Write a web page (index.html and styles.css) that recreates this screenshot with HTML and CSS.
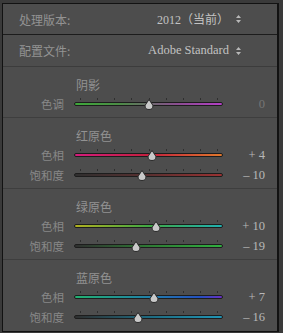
FILE: index.html
```html
<!DOCTYPE html>
<html lang="zh-CN">
<head>
<meta charset="utf-8">
<link rel="stylesheet" href="styles.css">
</head>
<body>
<div class="panel">
  <div class="top-row first">
    <span class="top-label">处理版本:</span>
    <span class="top-value">2012（当前）</span>
    <svg class="updown" width="5" height="8" viewBox="0 0 5 8"><path d="M2.5 0 L5 3 L0 3 Z M0 5 L5 5 L2.5 8 Z" fill="#b8b8b8"/></svg>
  </div>
  <div class="top-row second">
    <span class="top-label">配置文件:</span>
    <span class="top-value latin">Adobe Standard</span>
    <svg class="updown" width="5" height="8" viewBox="0 0 5 8"><path d="M2.5 0 L5 3 L0 3 Z M0 5 L5 5 L2.5 8 Z" fill="#b8b8b8"/></svg>
  </div>

  <div class="section shadows">
    <div class="sec-title">阴影</div>
    <div class="srow">
      <span class="lbl">色调</span>
      <div class="slider">
        <div class="ticks"><i></i><i></i><i></i><i></i><i></i><i></i><i></i><i></i><i></i></div>
        <div class="track tr-shadow"></div>
        <svg class="thumb" style="left:70px" width="10" height="11" viewBox="0 0 10 11"><path d="M5 0.5 L8.8 6.2 Q9.6 10.5 5 10.5 Q0.4 10.5 1.2 6.2 Z" fill="#c9c9c9" stroke="#2a2a2a" stroke-width="1"/></svg>
      </div>
      <span class="val dim">0</span>
    </div>
  </div>

  <div class="section">
    <div class="sec-title">红原色</div>
    <div class="srow">
      <span class="lbl">色相</span>
      <div class="slider">
        <div class="ticks"><i></i><i></i><i></i><i></i><i></i><i></i><i></i><i></i><i></i></div>
        <div class="track tr-red-hue"></div>
        <svg class="thumb" style="left:73px" width="10" height="11" viewBox="0 0 10 11"><path d="M5 0.5 L8.8 6.2 Q9.6 10.5 5 10.5 Q0.4 10.5 1.2 6.2 Z" fill="#c9c9c9" stroke="#2a2a2a" stroke-width="1"/></svg>
      </div>
      <span class="val">+ 4</span>
    </div>
    <div class="srow">
      <span class="lbl">饱和度</span>
      <div class="slider">
        <div class="ticks"><i></i><i></i><i></i><i></i><i></i><i></i><i></i><i></i><i></i></div>
        <div class="track tr-red-sat"></div>
        <svg class="thumb" style="left:63px" width="10" height="11" viewBox="0 0 10 11"><path d="M5 0.5 L8.8 6.2 Q9.6 10.5 5 10.5 Q0.4 10.5 1.2 6.2 Z" fill="#c9c9c9" stroke="#2a2a2a" stroke-width="1"/></svg>
      </div>
      <span class="val">– 10</span>
    </div>
  </div>

  <div class="section">
    <div class="sec-title">绿原色</div>
    <div class="srow">
      <span class="lbl">色相</span>
      <div class="slider">
        <div class="ticks"><i></i><i></i><i></i><i></i><i></i><i></i><i></i><i></i><i></i></div>
        <div class="track tr-green-hue"></div>
        <svg class="thumb" style="left:77px" width="10" height="11" viewBox="0 0 10 11"><path d="M5 0.5 L8.8 6.2 Q9.6 10.5 5 10.5 Q0.4 10.5 1.2 6.2 Z" fill="#c9c9c9" stroke="#2a2a2a" stroke-width="1"/></svg>
      </div>
      <span class="val">+ 10</span>
    </div>
    <div class="srow">
      <span class="lbl">饱和度</span>
      <div class="slider">
        <div class="ticks"><i></i><i></i><i></i><i></i><i></i><i></i><i></i><i></i><i></i></div>
        <div class="track tr-green-sat"></div>
        <svg class="thumb" style="left:56.5px" width="10" height="11" viewBox="0 0 10 11"><path d="M5 0.5 L8.8 6.2 Q9.6 10.5 5 10.5 Q0.4 10.5 1.2 6.2 Z" fill="#c9c9c9" stroke="#2a2a2a" stroke-width="1"/></svg>
      </div>
      <span class="val">– 19</span>
    </div>
  </div>

  <div class="section">
    <div class="sec-title">蓝原色</div>
    <div class="srow">
      <span class="lbl">色相</span>
      <div class="slider">
        <div class="ticks"><i></i><i></i><i></i><i></i><i></i><i></i><i></i><i></i><i></i></div>
        <div class="track tr-blue-hue"></div>
        <svg class="thumb" style="left:75px" width="10" height="11" viewBox="0 0 10 11"><path d="M5 0.5 L8.8 6.2 Q9.6 10.5 5 10.5 Q0.4 10.5 1.2 6.2 Z" fill="#c9c9c9" stroke="#2a2a2a" stroke-width="1"/></svg>
      </div>
      <span class="val">+ 7</span>
    </div>
    <div class="srow">
      <span class="lbl">饱和度</span>
      <div class="slider">
        <div class="ticks"><i></i><i></i><i></i><i></i><i></i><i></i><i></i><i></i><i></i></div>
        <div class="track tr-blue-sat"></div>
        <svg class="thumb" style="left:58.5px" width="10" height="11" viewBox="0 0 10 11"><path d="M5 0.5 L8.8 6.2 Q9.6 10.5 5 10.5 Q0.4 10.5 1.2 6.2 Z" fill="#c9c9c9" stroke="#2a2a2a" stroke-width="1"/></svg>
      </div>
      <span class="val">– 16</span>
    </div>
  </div>
</div>
</body>
</html>
```

FILE: styles.css
```css
html, body {
  margin: 0;
  padding: 0;
}
body {
  width: 283px;
  height: 333px;
  background: #3a3a3a;
  font-family: "Liberation Serif", "Noto Sans CJK SC", serif;
  overflow: hidden;
}
.panel {
  box-sizing: border-box;
  margin: 3px 0 0 2px;
  width: 277px;
  height: 329px;
  border: 1px solid #121212;
  border-right-width: 2px;
  background: #4d4d4d;
  display: flex;
  flex-direction: column;
}
.top-row {
  display: flex;
  align-items: center;
  padding: 0 36px 0 16px;
  font-size: 12.5px;
}
.top-row.first {
  height: 30px;
  border-bottom: 1px solid #1c1c1c;
}
.top-row.second {
  height: 31px;
  border-bottom: 1px solid #3c3c3c;
}
.top-label {
  color: #939393;
  font-family: "Noto Sans CJK SC", sans-serif;
  font-size: 12px;
}
.top-value {
  margin-left: auto;
  color: #c2c2c2;
  font-family: "Liberation Serif", "Noto Sans CJK SC", serif;
  font-size: 12px;
}
.top-value.latin {
  font-size: 12.5px;
}
.updown {
  margin-left: 7px;
  display: block;
}
.section {
  padding: 9px 0 3px;
  border-bottom: 1px solid #3e3e3e;
}
.section:last-child {
  border-bottom: none;
  flex: 1;
}
.shadows {
  padding-bottom: 3px;
}
.sec-title {
  height: 18px;
  line-height: 18px;
  padding-left: 73px;
  color: #929292;
  font-family: "Noto Sans CJK SC", sans-serif;
  font-size: 12px;
}
.srow {
  display: flex;
  align-items: flex-start;
  height: 20px;
}
.lbl {
  width: 61px;
  margin-right: 10px;
  text-align: right;
  line-height: 20px;
  color: #888888;
  font-family: "Noto Sans CJK SC", sans-serif;
  font-size: 11.5px;
}
.slider {
  position: relative;
  width: 149px;
  height: 20px;
  box-sizing: border-box;
  padding-top: 4px;
}
.ticks {
  height: 2px;
  display: flex;
  justify-content: space-between;
  padding: 0 5px 0 6px;
  margin-bottom: 2px;
}
.ticks i {
  display: block;
  width: 1px;
  height: 2px;
  background: #2f2f2f;
}
.track {
  box-sizing: border-box;
  height: 4px;
  border: 1px solid #1d1d1d;
  border-radius: 2px;
}
.thumb {
  position: absolute;
  top: 5px;
  display: block;
}
.val {
  flex: 1;
  text-align: right;
  padding-right: 12px;
  line-height: 20px;
  color: #b8b8b8;
  font-size: 12.5px;
}
.val.dim {
  color: #767676;
}
.tr-shadow {
  background: linear-gradient(90deg, #3ea83a 0%, #4c8c46 30%, #6a6a6a 50%, #8c4d92 70%, #b33fc6 100%);
}
.tr-red-hue {
  background: linear-gradient(90deg, #d41c7c 0%, #c4203e 50%, #e0782c 100%);
}
.tr-red-sat {
  background: linear-gradient(90deg, #2f2f2f 0%, #5a3030 50%, #9a3232 100%);
}
.tr-green-hue {
  background: linear-gradient(90deg, #b0b020 0%, #40a844 50%, #20b0b0 100%);
}
.tr-green-sat {
  background: linear-gradient(90deg, #2f2f2f 0%, #2e7a34 50%, #30b040 100%);
}
.tr-blue-hue {
  background: linear-gradient(90deg, #22b070 0%, #2080a8 50%, #2450c0 85%, #6a30c4 100%);
}
.tr-blue-sat {
  background: linear-gradient(90deg, #2f2f2f 0%, #1e6a80 50%, #2094b4 100%);
}
```
